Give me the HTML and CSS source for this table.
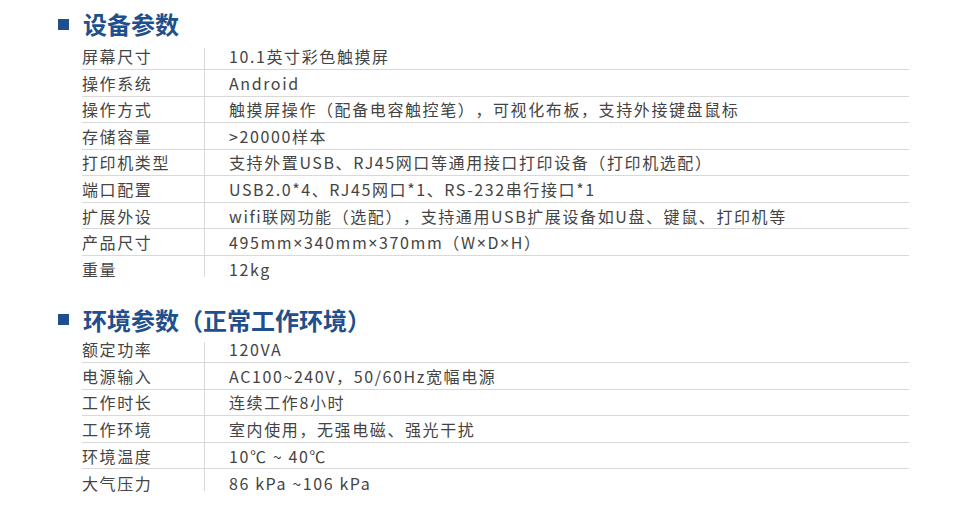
FILE: index.html
```html
<!DOCTYPE html>
<html lang="zh-CN">
<head>
<meta charset="utf-8">
<title>设备参数</title>
<link rel="stylesheet" href="styles.css">
</head>
<body>
<div class="page">
  <h2 class="heading heading-first"><span class="mark"></span>设备参数</h2>
  <div class="spec">
    <div class="row"><div class="label">屏幕尺寸</div><div class="value">10.1英寸彩色触摸屏</div></div>
    <div class="row"><div class="label">操作系统</div><div class="value">Android</div></div>
    <div class="row"><div class="label">操作方式</div><div class="value">触摸屏操作（配备电容触控笔），可视化布板，支持外接键盘鼠标</div></div>
    <div class="row"><div class="label">存储容量</div><div class="value">&gt;20000样本</div></div>
    <div class="row"><div class="label">打印机类型</div><div class="value">支持外置USB、RJ45网口等通用接口打印设备（打印机选配）</div></div>
    <div class="row"><div class="label">端口配置</div><div class="value">USB2.0*4、RJ45网口*1、RS-232串行接口*1</div></div>
    <div class="row"><div class="label">扩展外设</div><div class="value">wifi联网功能（选配），支持通用USB扩展设备如U盘、键鼠、打印机等</div></div>
    <div class="row"><div class="label">产品尺寸</div><div class="value">495mm<span class="latin">×</span>340mm<span class="latin">×</span>370mm（W<span class="latin">×</span>D<span class="latin">×</span>H）</div></div>
    <div class="row"><div class="label">重量</div><div class="value">12kg</div></div>
  </div>
  <h2 class="heading heading-second"><span class="mark"></span>环境参数（正常工作环境）</h2>
  <div class="spec">
    <div class="row"><div class="label">额定功率</div><div class="value">120VA</div></div>
    <div class="row"><div class="label">电源输入</div><div class="value">AC100~240V，50/60Hz宽幅电源</div></div>
    <div class="row"><div class="label">工作时长</div><div class="value">连续工作8小时</div></div>
    <div class="row"><div class="label">工作环境</div><div class="value">室内使用，无强电磁、强光干扰</div></div>
    <div class="row"><div class="label">环境温度</div><div class="value">10℃ ~ 40℃</div></div>
    <div class="row"><div class="label">大气压力</div><div class="value">86 kPa ~106 kPa</div></div>
  </div>
</div>
</body>
</html>
```
FILE: styles.css
```css
html, body {
  margin: 0;
  padding: 0;
  background: #ffffff;
}
body {
  font-family: "Noto Sans CJK SC", "Noto Sans", sans-serif;
  color: #444444;
  text-spacing-trim: space-all;
}
.page {
  padding: 9px 0 0 58px;
}
.heading {
  display: flex;
  align-items: center;
  margin: 0;
  height: 30px;
  line-height: 30px;
  font-size: 24px;
  font-weight: 700;
  color: #1f4f8c;
}
.heading-first {
  margin-bottom: 4.4px;
}
.heading-second {
  margin-top: 22.4px;
  margin-bottom: 1.7px;
}
.mark {
  width: 11px;
  height: 11px;
  background: #1f4f8c;
  margin-right: 14px;
  flex: none;
}
.spec {
  position: relative;
  margin-left: 24px;
  width: 827px;
}
.spec::before {
  content: "";
  position: absolute;
  left: 122px;
  top: 5px;
  bottom: 5px;
  width: 1px;
  background: #d9d9d9;
}
.row {
  display: flex;
  align-items: center;
  height: 25.57px;
  border-bottom: 1px solid #d9d9d9;
  font-size: 16px;
  letter-spacing: 1.6px;
  white-space: nowrap;
}
.row:last-child {
  border-bottom: none;
  height: 26.57px;
}
.label {
  width: 122px;
  flex: none;
}
.value {
  padding-left: 25px;
}
.latin {
  font-family: "Noto Sans", sans-serif;
}
```
